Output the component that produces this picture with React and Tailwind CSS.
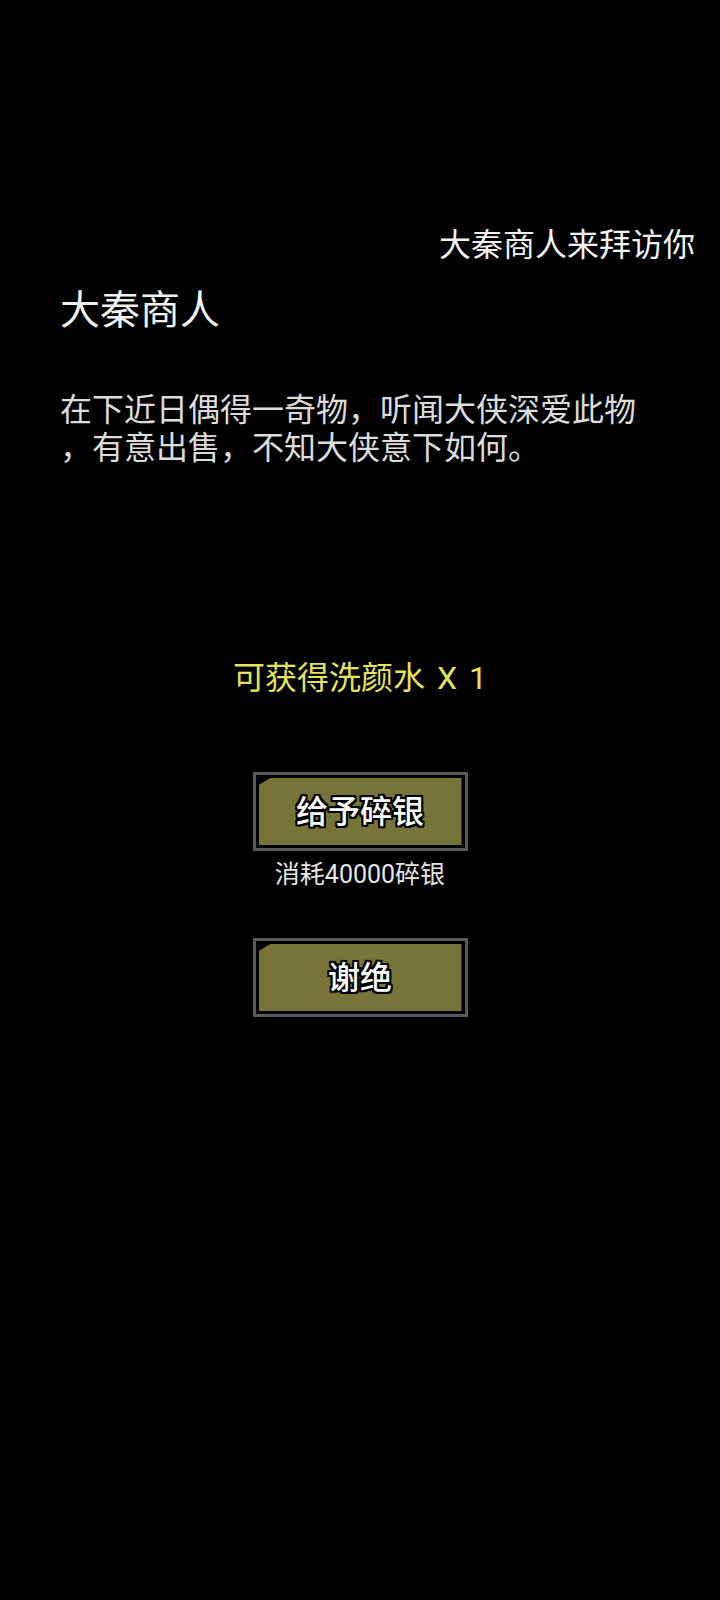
const cjk = { fontFamily: 'Roboto, "Noto Sans CJK SC", "Noto Sans", sans-serif' }

function GameButton({ label }) {
  return (
    <div className="w-[215px] h-[79px] border-[3px] border-[#5a5a5a] bg-black p-[3px]">
      <div className="h-full w-full bg-[#77743a] flex items-center justify-center [clip-path:polygon(12px_0,100%_0,100%_100%,0_100%,0_7px)]">
        <span className="text-[32px] leading-none font-medium text-white [text-shadow:2px_0_0_#000,-2px_0_0_#000,0_2px_0_#000,0_-2px_0_#000,2px_2px_0_#000,-2px_-2px_0_#000,2px_-2px_0_#000,-2px_2px_0_#000]">
          {label}
        </span>
      </div>
    </div>
  )
}

export default function App() {
  return (
    <div className="min-h-[1600px] w-[720px] bg-black text-white" style={cjk}>
      <div className="pt-[227px] pr-[25px] text-right text-[32px] leading-[36px] text-[#f2f2f2]">
        大秦商人来拜访你
      </div>

      <div className="mt-[24px] pl-[60px] text-[40px] leading-[48px] text-[#f2f2f2]">大秦商人</div>

      <div className="mt-[56px] pl-[60px] text-[32px] leading-[38px] text-[#dcdcdc]">
        <div>在下近日偶得一奇物，听闻大侠深爱此物</div>
        <div>，有意出售，不知大侠意下如何。</div>
      </div>

      <div className="mt-[193px] text-center text-[32px] leading-[36px] text-[#e4e35a] [word-spacing:4px]">
        可获得洗颜水 X 1
      </div>

      <div className="mt-[76px] flex flex-col items-center">
        <GameButton label="给予碎银" />
        <div className="mt-[9px] text-[25px] leading-[30px] text-[#e6e6e6]">消耗40000碎银</div>
        <div className="mt-[48px]">
          <GameButton label="谢绝" />
        </div>
      </div>
    </div>
  )
}
